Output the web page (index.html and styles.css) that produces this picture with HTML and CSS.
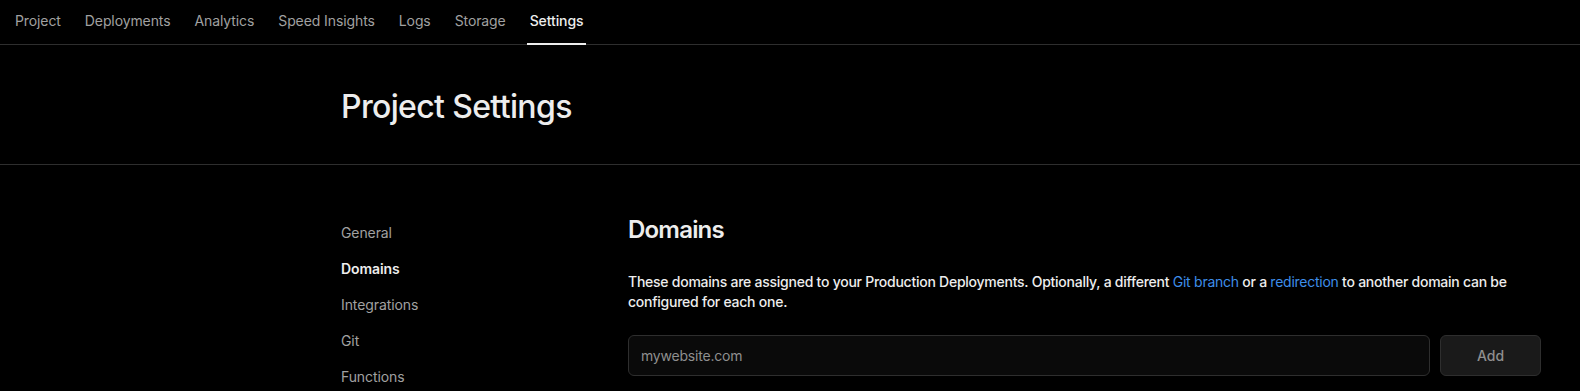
FILE: index.html
```html
<!DOCTYPE html>
<html lang="en">
<head>
    <meta charset="UTF-8">
    <meta name="viewport" content="width=device-width, initial-scale=1.0">
    <title>Project Settings</title>
    <link rel="stylesheet" href="styles.css">
</head>
<body>
    <nav class="tabs">
        <a class="tab" href="#">Project</a>
        <a class="tab" href="#">Deployments</a>
        <a class="tab" href="#">Analytics</a>
        <a class="tab" href="#">Speed Insights</a>
        <a class="tab" href="#">Logs</a>
        <a class="tab" href="#">Storage</a>
        <a class="tab active" href="#">Settings</a>
    </nav>

    <header class="page-header">
        <div class="wrap">
            <h1>Project Settings</h1>
        </div>
    </header>

    <div class="wrap layout">
        <aside class="sidebar">
            <a class="side-link" href="#">General</a>
            <a class="side-link active" href="#">Domains</a>
            <a class="side-link" href="#">Integrations</a>
            <a class="side-link" href="#">Git</a>
            <a class="side-link" href="#">Functions</a>
        </aside>

        <main class="content">
            <h2>Domains</h2>
            <p class="lead">These domains are assigned to your Production Deployments. Optionally, a different <a href="#">Git branch</a> or a <a href="#">redirection</a> to another domain can be configured for each one.</p>
            <form class="add-domain">
                <input type="text" class="domain-input" placeholder="mywebsite.com">
                <button type="button" class="add-btn">Add</button>
            </form>
        </main>
    </div>
</body>
</html>
```

FILE: styles.css
```css
body {
    font-family: 'Inter', 'Noto Sans', sans-serif;
    background-color: #000;
    color: #ededed;
    margin: 0;
    -webkit-font-smoothing: antialiased;
}

a {
    text-decoration: none;
}

.tabs {
    display: flex;
    height: 44px;
    padding-left: 3px;
    border-bottom: 1px solid #2e2e2e;
}

.tab {
    display: flex;
    align-items: center;
    padding: 0 12px 3px;
    font-size: 14px;
    letter-spacing: -0.1px;
    color: #a1a1a1;
    position: relative;
}

.tab.active {
    color: #ededed;
    font-weight: 500;
}

.tab.active::after {
    content: "";
    position: absolute;
    left: 9px;
    right: 9px;
    bottom: -1px;
    height: 2px;
    background-color: #ededed;
}

.wrap {
    width: 1200px;
    margin-left: 341px;
}

.page-header {
    border-bottom: 1px solid #2e2e2e;
    height: 119px;
}

.page-header h1 {
    margin: 0;
    padding-top: 42px;
    font-size: 32px;
    line-height: 40px;
    font-weight: 500;
    letter-spacing: -0.65px;
}

.layout {
    display: flex;
    padding-top: 49px;
}

.sidebar {
    width: 287px;
    flex-shrink: 0;
    display: flex;
    flex-direction: column;
    gap: 16px;
    padding-top: 9px;
}

.side-link {
    font-size: 14px;
    line-height: 20px;
    letter-spacing: -0.1px;
    color: #a1a1a1;
}

.side-link.active {
    color: #ededed;
    font-weight: 600;
}

.content {
    flex: 1;
}

.content h2 {
    margin: 0;
    font-size: 24px;
    line-height: 32px;
    font-weight: 600;
    letter-spacing: -0.8px;
}

.lead {
    margin: 26px 0 23px;
    font-size: 14px;
    line-height: 20px;
    letter-spacing: -0.25px;
    font-weight: 500;
    color: #ededed;
    max-width: 900px;
}

.lead a {
    color: #3e8ee9;
    font-weight: 400;
}

.add-domain {
    display: flex;
    gap: 10px;
}

.domain-input {
    flex: 1;
    height: 41px;
    box-sizing: border-box;
    background-color: #0a0a0a;
    border: 1px solid #2e2e2e;
    border-radius: 6px;
    padding: 0 12px;
    font-family: inherit;
    font-size: 14px;
    letter-spacing: -0.2px;
    color: #ededed;
    outline: none;
}

.domain-input::placeholder {
    color: #8f8f8f;
}

.add-btn {
    width: 101px;
    height: 41px;
    background-color: #1a1a1a;
    border: 1px solid #2e2e2e;
    border-radius: 6px;
    font-family: inherit;
    font-size: 14px;
    font-weight: 500;
    color: #8f8f8f;
    cursor: pointer;
}
```
